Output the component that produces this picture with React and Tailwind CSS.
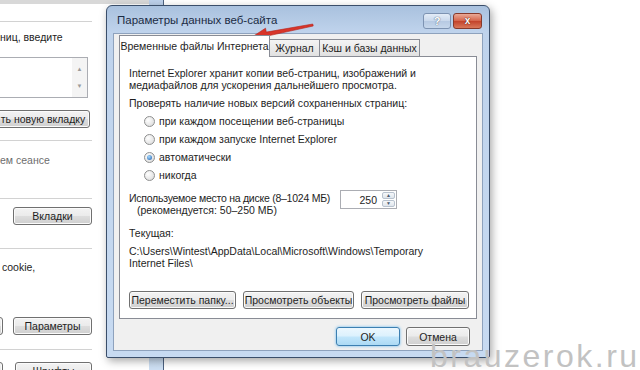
import React from 'react';

const btn =
  "flex h-[18px] items-center justify-center rounded-[3px] border border-[#707070] bg-[linear-gradient(to_bottom,#f3f3f3_0%,#ebebeb_48%,#dddddd_52%,#cfcfcf_100%)] shadow-[inset_0_0_0_1px_#fbfbfb] text-[10.5px] text-[#1e1e1e]";

const Rule = ({ className = '' }) => <div className={`h-px w-[92px] bg-[#d2d2d2] ${className}`} />;

function Radio({ checked, label }) {
  return (
    <div className="flex h-[18px] items-center">
      <span className="ml-[15px] flex h-[11px] w-[11px] items-center justify-center rounded-full border border-[#8e8f8f] bg-[radial-gradient(circle_at_35%_35%,#ffffff,#d6d6d6)]">
        {checked && (
          <span className="h-[5px] w-[5px] rounded-full bg-[radial-gradient(circle_at_40%_35%,#a9dcff,#1b5cae)]" />
        )}
      </span>
      <span className="ml-[4px]">{label}</span>
    </div>
  );
}

function BackWindow() {
  return (
    <div className="absolute left-0 top-0 flex h-[370px] w-[164px] overflow-hidden">
      <div className="flex w-[149px] flex-col bg-white text-[10.5px] leading-[12px] text-[#1e1e1e] *:shrink-0">
        <div className="h-[4px] bg-[#d8d8d8]" />
        <Rule className="mt-[17px]" />
        <div className="mt-[9px]">ниц, введите</div>
        <div className="-ml-px mt-[14px] flex h-[41px] w-[89px] border border-[#abadb3]">
          <div className="flex-1" />
          <div className="flex w-[15px] flex-col items-center justify-between bg-[#f4f4f4] py-[8px] text-[6px] leading-none text-[#9a9a9a]">
            <span>▲</span>
            <span>▼</span>
          </div>
        </div>
        <div className={`${btn} -ml-[4px] mt-[12px] w-[94px]`}>ть новую вкладку</div>
        <Rule className="mt-[12px]" />
        <div className="mt-[13px] text-[#6d6d6d]">ем сеансе</div>
        <Rule className="mt-[32px]" />
        <div className={`${btn} ml-[13px] mt-[8px] w-[79px]`}>Вкладки</div>
        <Rule className="mt-[23px]" />
        <div className="ml-[2px] mt-[12px]">cookie,</div>
        <div className="mt-[44px] flex gap-[10px]">
          <div className={`${btn} -ml-[10px] w-[13px]`} />
          <div className={`${btn} w-[79px]`}>Параметры</div>
        </div>
        <Rule className="mt-[14px]" />
        <div className="mt-[12px] flex gap-[10px]">
          <div className={`${btn} -ml-[10px] w-[13px]`} />
          <div className={`${btn} ml-[2px] w-[77px]`}>Шрифты</div>
        </div>
      </div>
      <div className="w-[15px] border-r border-[#4d6280] bg-[linear-gradient(to_bottom,#bcd0ea,#cddff3)]" />
    </div>
  );
}

function Dialog() {
  return (
    <div className="absolute left-[106px] top-[5px] flex h-[353px] w-[384px] flex-col rounded-t-[6px] rounded-b-[2px] border border-[#3a4e6a] bg-[linear-gradient(to_bottom,#a9c1de_0px,#bfd3ec_26px,#c7daf1_100%)] shadow-[2px_3px_8px_rgba(0,0,0,0.35)]">
      <div className="flex h-[27px] items-start">
        <div className="ml-[10px] mt-[7px] text-[11.5px] leading-[14px] text-[#1b2b44]">Параметры данных веб-сайта</div>
        <div className="ml-auto mr-[7px] mt-[7px] flex gap-[2px]">
          <div className="flex h-[16px] w-[28px] items-center justify-center rounded-[3px] border border-[#7d93b2] bg-[linear-gradient(to_bottom,#e3ecf7,#c9d8ec_50%,#b6c9e2_50%,#c6d7ec)] text-[11px] font-bold leading-none text-white [text-shadow:0_0_1px_#5d6f88,0_0_1px_#5d6f88]">
            ?
          </div>
          <div className="flex h-[16px] w-[29px] items-center justify-center rounded-[3px] border border-[#86392b] bg-[linear-gradient(to_bottom,#eaa996,#d5654c_48%,#c3432b_52%,#d9785a)] text-[10px] font-bold leading-none text-white [text-shadow:0_0_1px_#5a1a10,0_0_1px_#5a1a10]">
            x
          </div>
        </div>
      </div>

      <div className="mx-[6px] mb-[6px] flex flex-1 flex-col border border-[#8ea2bd] bg-[#f0f0f0] px-[5px] pt-px text-[10.5px] leading-[12px] text-[#1e1e1e]">
        <div className="relative z-10 -mb-px flex h-[22px] items-end">
          <div className="flex h-[22px] w-[151px] items-center justify-center border-x border-t border-[#898c95] bg-white pb-[2px]">
            Временные файлы Интернета
          </div>
          <div className="-ml-px flex h-[18px] w-[51px] items-center justify-center border border-[#898c95] bg-[linear-gradient(to_bottom,#f4f4f4,#e1e1e1)]">
            Журнал
          </div>
          <div className="-ml-px flex h-[18px] w-[101px] items-center justify-center border border-[#898c95] bg-[linear-gradient(to_bottom,#f4f4f4,#e1e1e1)]">
            Кэш и базы данных
          </div>
        </div>

        <div className="flex h-[263px] flex-col border border-[#898c95] bg-white pl-[9px] pt-[10px]">
          <div>Internet Explorer хранит копии веб-страниц, изображений и</div>
          <div>медиафайлов для ускорения дальнейшего просмотра.</div>
          <div className="mt-[6px]">Проверять наличие новых версий сохраненных страниц:</div>
          <div className="mt-[3px]">
            <Radio label="при каждом посещении веб-страницы" />
            <Radio label="при каждом запуске Internet Explorer" />
            <Radio checked label="автоматически" />
            <Radio label="никогда" />
          </div>
          <div className="mt-[5px] flex items-start">
            <div className="mt-[3px] w-[211px]">
              <div className="tracking-[-0.25px]">Используемое место на диске (8–1024 МБ)</div>
              <div className="pl-[8px]">(рекомендуется: 50–250 МБ)</div>
            </div>
            <div className="mt-px flex h-[19px] w-[57px] border border-[#abadb3] bg-white">
              <div className="flex flex-1 items-center justify-end pr-[5px]">250</div>
              <div className="my-px mr-px flex w-[13px] flex-col gap-px">
                <div className="flex flex-1 items-center justify-center rounded-[2px] border border-[#b8c2ce] bg-[linear-gradient(to_bottom,#f6f8fa,#dfe5ec)] text-[5px] leading-none text-[#4a5a6e]">▲</div>
                <div className="flex flex-1 items-center justify-center rounded-[2px] border border-[#b8c2ce] bg-[linear-gradient(to_bottom,#f6f8fa,#dfe5ec)] text-[5px] leading-none text-[#4a5a6e]">▼</div>
              </div>
            </div>
          </div>
          <div className="mt-[11px]">Текущая:</div>
          <div className="mt-[6px]">{'C:\\Users\\Wintest\\AppData\\Local\\Microsoft\\Windows\\Temporary'}</div>
          <div>{'Internet Files\\'}</div>
          <div className="mt-[22px] flex gap-[7px]">
            <div className={`${btn} w-[107px]`}>Переместить папку...</div>
            <div className={`${btn} w-[111px]`}>Просмотреть объекты</div>
            <div className={`${btn} w-[108px]`}>Просмотреть файлы</div>
          </div>
        </div>

        <div className="mr-[7px] mt-[8px] flex justify-end gap-[6px]">
          <div className="flex h-[19px] w-[64px] items-center justify-center rounded-[3px] border border-[#3c7fb1] bg-[linear-gradient(to_bottom,#ecf7fe,#dcf1fd_48%,#c2e6fb_52%,#acdaf4)] shadow-[0_0_3px_#67b7ee]">
            OK
          </div>
          <div className={`${btn} h-[19px] w-[64px]`}>Отмена</div>
        </div>
      </div>
    </div>
  );
}

export default function App() {
  return (
    <div className="relative h-[370px] w-[640px] overflow-hidden bg-white font-['Liberation_Sans',Arial,sans-serif]">
      <BackWindow />
      <Dialog />
      <svg className="absolute left-[248px] top-[18px]" width="72" height="26" viewBox="0 0 72 26">
        <polygon
          points="4,19 17.5,10.2 18.3,14.1 64.8,6 65.2,8 19.1,18.1 19.9,22"
          fill="#d8352a"
          stroke="#b3241b"
          strokeWidth="0.6"
          strokeLinejoin="round"
        />
      </svg>
      <div className="absolute left-[430px] top-[340px] text-[32px] leading-[32px] tracking-[2.5px] text-[#c2c2c2]">
        brauzerok.ru
      </div>
    </div>
  );
}
